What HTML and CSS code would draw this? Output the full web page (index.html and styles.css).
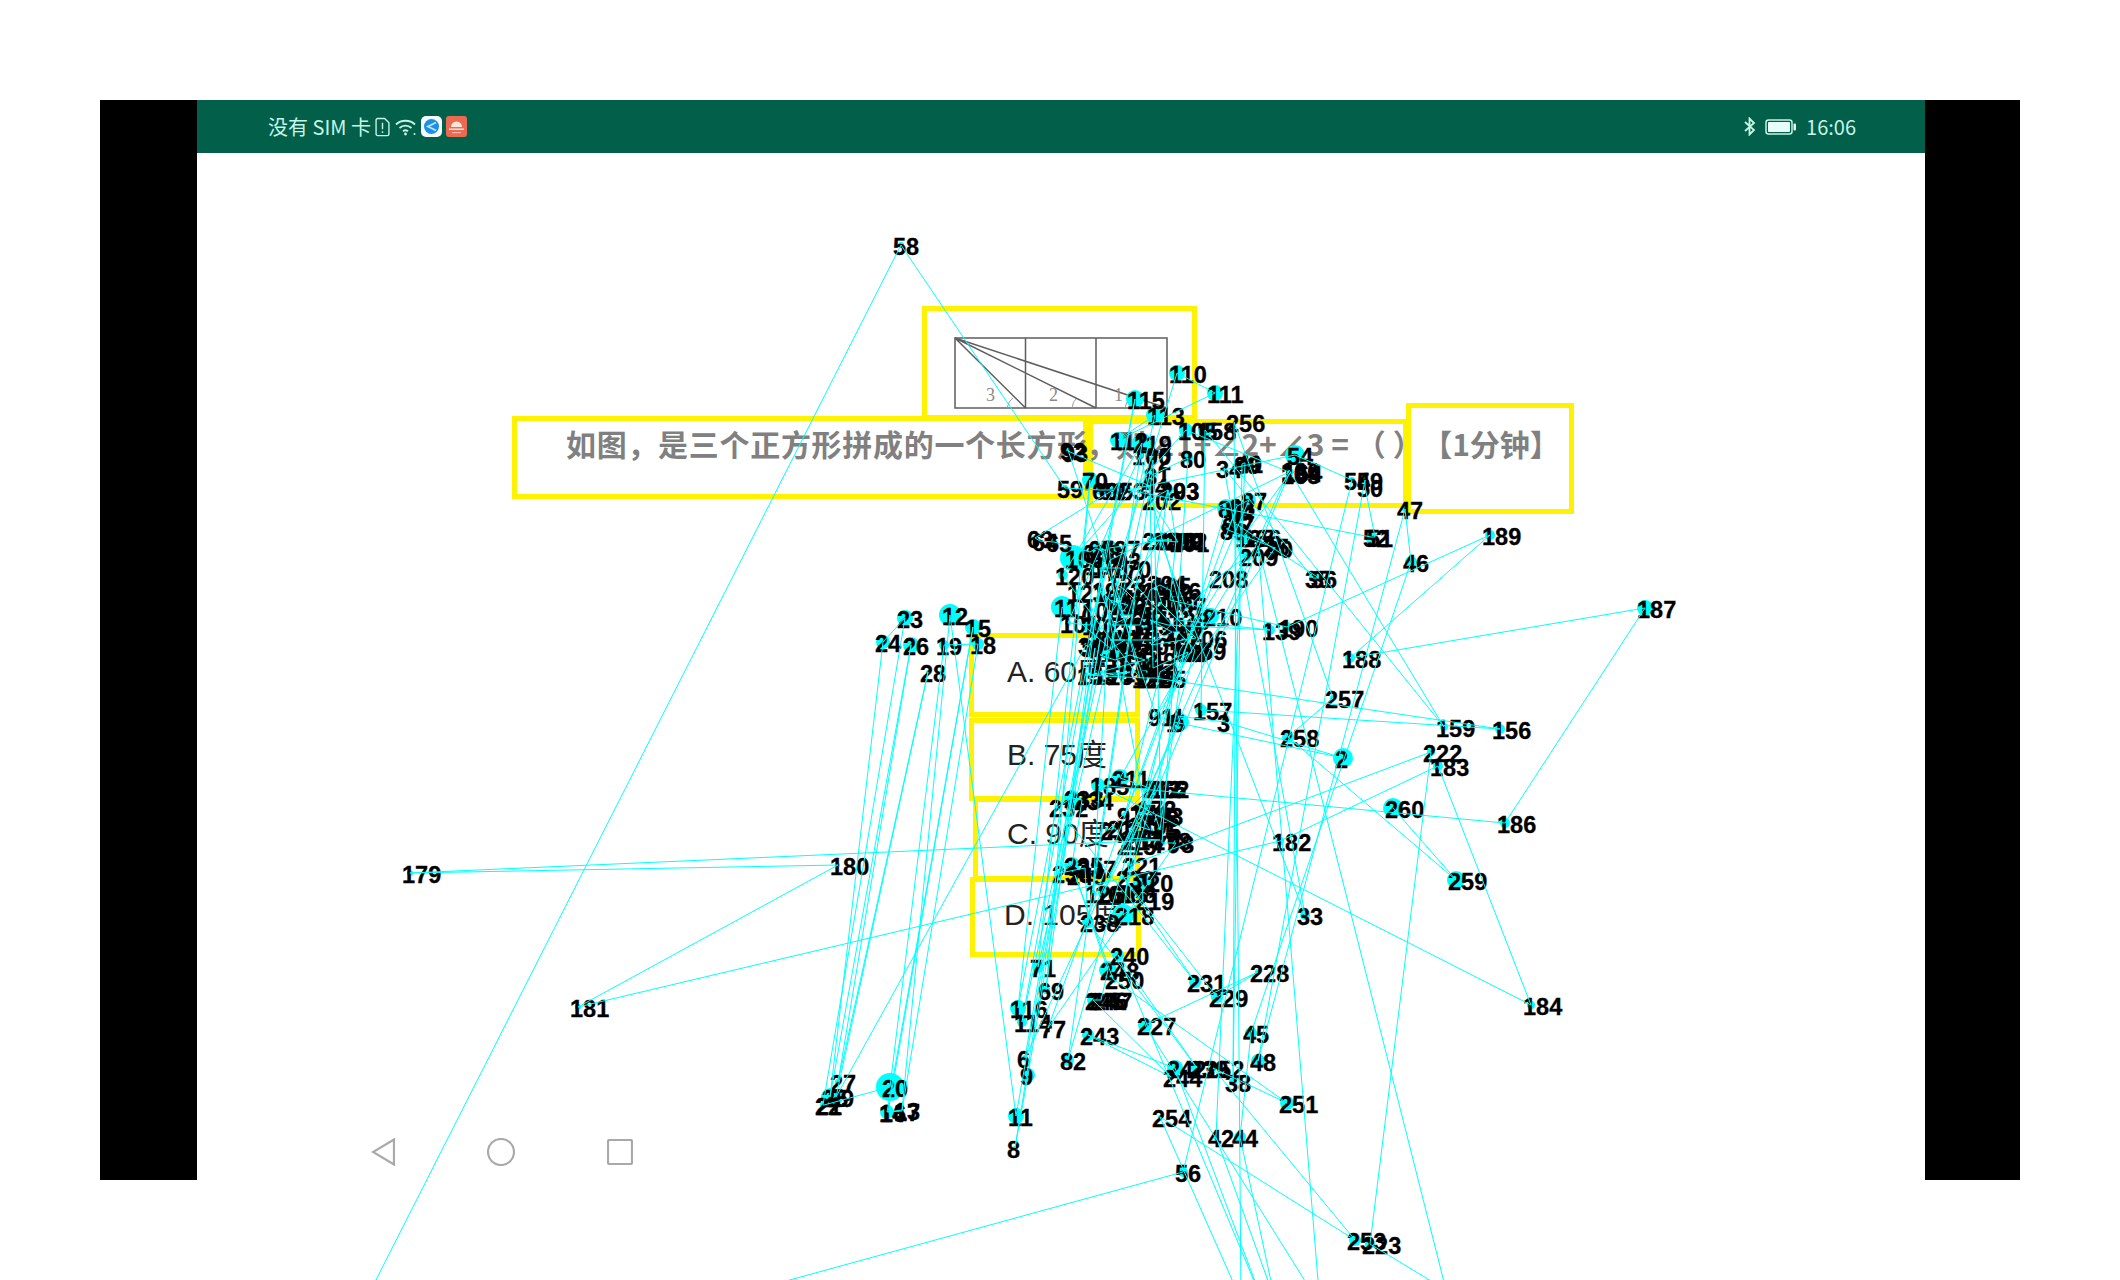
FILE: index.html
```html
<!DOCTYPE html>
<html lang="zh">
<head>
<meta charset="utf-8">
<title>关键点标注</title>
<link rel="stylesheet" href="styles.css">
</head>
<body>
<main class="stage">
  <section class="device">
    <div class="screen">
      <header class="statusbar">
        <div class="status-group">
          <span class="status-text">没有 SIM 卡</span>
          <svg class="ic-sim" viewBox="0 0 14 18"><path d="M1 2.500A1.500 1.500 0 0 1 2.500 1H9l4 4v10.500a1.500 1.500 0 0 1-1.500 1.500h-9A1.500 1.500 0 0 1 1 15.500z"/><path d="M7 5v6M7 13v1.500"/></svg>
          <svg class="ic-wifi" viewBox="0 0 21 18"><path d="M1 6.500C6 1.500 15 1.500 20 6.500M4.500 10C8 6.800 13 6.800 16.500 10M8 13.300c1.500-1.300 3.500-1.300 5 0"/><circle class="dot" cx="10.500" cy="16" r="1.400"/><circle class="dot" cx="19.500" cy="16" r="1"/></svg>
          <svg class="ic-app" viewBox="0 0 21 21"><rect width="21" height="21" rx="5" fill="#f4fbff"/><circle cx="10.500" cy="10.500" r="7.500" fill="#1c8fe6"/><path d="M15 6.500 7 10.500l8 4" fill="none" stroke="#bfe6ff" stroke-width="1.800"/></svg>
          <svg class="ic-app ic-app-orange" viewBox="0 0 21 21"><rect width="21" height="21" rx="3" fill="#ea6a52"/><path d="M5 11a5.500 5.500 0 0 1 11 0z" fill="#fde6d8"/><rect x="3" y="12.500" width="15" height="1.500" fill="#fde6d8"/><rect x="6" y="16" width="9" height="1.200" fill="#f7b7a4"/></svg>
        </div>
        <div class="status-group">
          <svg class="ic-bt" viewBox="0 0 13 19"><path d="M2 5l9 8-4.500 4.500v-16L11 6l-9 8"/></svg>
          <svg class="ic-battery" viewBox="0 0 32 16"><rect x="1" y="1" width="26" height="14" rx="2.500" class="shell"/><rect x="3" y="3" width="22" height="10" rx="1" class="charge"/><rect x="28.500" y="4.500" width="2.500" height="7" rx="1" class="charge"/></svg>
          <span class="status-text">16:06</span>
        </div>
      </header>
      <div class="page"></div>
      <nav class="navbar">
        <svg class="nav-back" viewBox="0 0 24 28"><path d="M23 1.500v25L2 14z"/></svg>
        <svg class="nav-home" viewBox="0 0 28 28"><circle cx="14" cy="14" r="13"/></svg>
        <svg class="nav-recent" viewBox="0 0 26 26"><rect x="1" y="1" width="24" height="24" rx="1.500"/></svg>
      </nav>
    </div>
  </section>

  <div class="box box-figure">
    <svg class="figure" viewBox="0 0 214 72">
      <rect x="1" y="1" width="212" height="70"/>
      <path d="M71.500 1v70M142 1v70M1 1l70.500 70M1 1l141 70M1 1l212 70"/>
      <path class="arc" d="M53 71q2-8 6-10M118 71q1-7 4-9M171 71q1-6 4-8"/>
      <text x="32" y="64">3</text><text x="95" y="64">2</text><text x="160" y="64">1</text>
    </svg>
  </div>
  <div class="box box-question q-a"><p class="question">如图，是三个正方形拼成的一个长方形</p></div>
  <div class="box box-question q-b"><p class="question">，则∠1+∠2+∠3 = （ ）</p></div>
  <div class="box box-time"><p class="question">【1分钟】</p></div>
  <div class="box box-option opt-a"><p class="option">A. 60度</p></div>
  <div class="box box-option opt-b"><p class="option">B. 75度</p></div>
  <div class="box box-option opt-c"><p class="option">C. 90度</p></div>
  <div class="box box-option opt-d"><p class="option">D. 105度</p></div>

  <svg id="pose" class="pose" viewBox="0 0 2120 1280"></svg>
</main>
<script src="script.js"></script>
</body>
</html>
```
FILE: styles.css
```css
* { box-sizing: border-box; }
html, body { margin: 0; background: #fff; overflow: hidden; }
.stage { position: relative; width: 2120px; height: 1280px; overflow: hidden; background: #fff; font-family: "Noto Sans CJK SC", "Liberation Sans", sans-serif; }

.device { margin: 100px 96px 0 100px; height: 1080px; padding: 0 95px 0 97px; background: #000; width: 1920px; }
.screen { display: flex; flex-direction: column; height: 100%; background: #fff; }
.statusbar { display: flex; justify-content: space-between; align-items: center; height: 53px; padding: 0 69px 0 71px; background: #025f4a; flex: none; }
.status-group { display: flex; align-items: center; gap: 5px; }
.status-text { font-family: "Noto Sans CJK SC", "Noto Sans", sans-serif; font-size: 20px; color: #c6f4e6; }
.ic-sim { width: 15px; height: 20px; margin-left: -1px; fill: none; stroke: #c6f4e6; stroke-width: 1.300; }
.ic-wifi { width: 21px; height: 18px; fill: none; stroke: #c6f4e6; stroke-width: 1.800; }
.ic-wifi .dot { fill: #c6f4e6; stroke: none; }
.ic-app { width: 21px; height: 21px; }
.ic-app-orange { margin-left: -1px; }
.ic-bt { width: 13px; height: 19px; margin-right: 4px; fill: none; stroke: #c6f4e6; stroke-width: 1.800; }
.ic-battery { width: 32px; height: 16px; margin-right: 4px; }
.ic-battery .shell { fill: none; stroke: #c6f4e6; stroke-width: 1.500; }
.ic-battery .charge { fill: #e6fff8; }
.page { flex: 1; }
.navbar { display: flex; align-items: center; gap: 92px; flex: none; padding: 0 0 14px 174px; }
.navbar svg { fill: none; stroke: #a9a9a9; stroke-width: 2.200; flex: none; }
.nav-back { width: 24px; height: 28px; }
.nav-home { width: 28px; height: 28px; }
.nav-recent { width: 26px; height: 26px; }

.box { position: absolute; border: 5px solid #fff200; }
.box-figure { left: 922px; top: 306px; width: 275px; height: 114px; padding: 26px 0 0 27px; }
.figure { display: block; width: 214px; height: 72px; overflow: visible; }
.figure rect, .figure path { fill: none; stroke: #5e5e5e; stroke-width: 1.500; }
.figure .arc { stroke: #9a9a9a; stroke-width: 1; }
.figure text { font-family: "Liberation Serif", serif; font-size: 18px; fill: #8a8a8a; }
.q-a { left: 512px; top: 416px; width: 576px; height: 83px; padding: 0 0 0 49px; }
.q-b { left: 1088px; top: 419px; width: 320px; height: 89px; padding: 0; }
.box-time { left: 1406px; top: 403px; width: 168px; height: 111px; padding: 13px 0 0 2px; text-align: center; }
.question { margin: 0; font-size: 30px; font-weight: 700; line-height: 44px; letter-spacing: .7px; color: #808080; white-space: nowrap; }
.q-b .question { letter-spacing: 0; margin-left: -7px; margin-top: -3px; }
.box-time .question { letter-spacing: 0; }

.box-option { height: 84px; padding: 14px 0 0 33px; }
.opt-a { left: 969px; top: 633px; width: 171px; }
.opt-b { left: 969px; top: 718px; width: 171px; height: 83px; padding-top: 12px; }
.opt-c { left: 973px; top: 797px; width: 167px; padding-left: 29px; padding-top: 12px; }
.opt-d { left: 970px; top: 877px; width: 171px; height: 80px; padding-left: 29px; padding-top: 13px; }
.option { margin: 0; font-family: "Liberation Sans", "Noto Sans CJK SC", sans-serif; font-size: 30px; line-height: 40px; color: #222; white-space: nowrap; }

.pose { position: absolute; left: 0; top: 0; width: 2120px; height: 1280px; }
.pose .joint { fill: #00ffff; }
.pose .bone { fill: none; stroke: #00ffff; stroke-width: 1; }
.pose .label { font-family: "Liberation Sans", sans-serif; font-size: 23.500px; font-weight: 700; fill: #000; stroke: #000; stroke-width: .3; }
```
FILE: script.js
```js
// Keypoints 1..260 as [x, y, radius]; the bones join them in index order.
var points = [
[1174,722,3],[1343,758,10],[1225,722,3],[1178,716,3],[1180,722,9],[1025,1058,3],[1095,648,2],[1015,1148,2],[1028,1075,7],[1100,640,3],
[1016,1116,8],[950,615,11],[902,1110,2],[887,1112,7],[973,627,8],[888,1112,4],[902,1111,2],[978,644,6],[944,645,5],[890,1087,14],
[824,1105,3],[823,1105,3],[905,618,8],[883,642,7],[830,1097,9],[911,645,8],[838,1082,3],[928,672,2],[836,1097,7],[1086,645,3],
[1088,647,3],[1160,540,3],[1305,915,5],[1224,468,2],[1313,578,4],[1319,578,4],[1236,524,4],[1233,1082,4],[1242,464,2],[1244,463,2],
[1245,463,3],[1216,1137,3],[1275,1300,1],[1240,1137,6],[1251,1033,6],[1411,562,6],[1405,509,3],[1258,1061,7],[1365,480,3],[1365,487,3],
[1375,537,3],[1371,537,6],[1128,490,3],[1295,455,10],[1352,480,3],[1183,1172,5],[309,1412,2],[901,245,3],[1065,488,3],[1100,490,5],
[1107,490,5],[1113,490,5],[1035,538,3],[1040,541,2],[1054,542,3],[1090,552,3],[1096,548,5],[1104,552,4],[1046,990,4],[1090,480,8],
[1038,967,6],[1153,460,4],[1161,817,3],[1155,815,3],[1160,830,3],[1184,652,2],[1048,1028,2],[1176,843,4],[1162,843,3],[1188,458,5],
[1152,475,5],[1068,1060,6],[1226,508,9],[1236,512,3],[1230,525,3],[1184,652,3],[1249,500,7],[1237,506,5],[1228,530,3],[1275,548,6],
[1156,716,2],[1068,450,3],[1070,452,3],[1150,486,3],[1153,668,11],[1188,652,3],[1125,815,3],[1160,672,4],[1192,652,3],[1140,455,3],
[1068,623,3],[1090,625,8],[1110,560,5],[1289,472,3],[1186,430,7],[1073,558,13],[1093,565,4],[1090,610,3],[1095,640,3],[1177,373,8],
[1215,393,8],[1118,440,8],[1155,415,9],[1022,1022,5],[1135,399,9],[1018,1008,8],[1062,607,11],[1112,650,12],[1142,443,10],[1063,575,5],
[1075,592,3],[1140,678,3],[1115,583,3],[1125,590,3],[1135,600,4],[1093,893,3],[1110,600,6],[1128,605,3],[1120,615,3],[1133,615,3],
[1112,625,3],[1126,625,3],[1140,625,3],[1150,590,3],[1160,585,3],[1170,590,3],[1175,605,3],[1178,620,3],[1270,630,5],[1168,625,3],
[1150,620,9],[1172,632,3],[1158,640,3],[1110,640,3],[1125,640,3],[1100,655,3],[1115,660,3],[1130,655,3],[1145,660,3],[1100,672,3],
[1115,675,3],[1130,672,3],[1085,675,3],[1145,678,3],[1155,678,3],[1500,729,5],[1201,710,6],[1205,430,7],[1444,727,4],[1289,470,3],
[1103,893,5],[1158,788,3],[1289,474,3],[1291,472,3],[1243,537,7],[1250,537,3],[1180,650,3],[1125,893,5],[1195,650,3],[1120,568,3],
[1100,568,3],[1145,808,3],[1152,815,3],[1138,812,3],[1150,830,3],[1135,825,3],[1128,838,3],[1160,840,3],[410,873,3],[838,865,2],
[578,1007,3],[1280,841,4],[1438,766,5],[1531,1005,4],[1098,785,7],[1505,823,5],[1645,608,8],[1350,658,5],[1490,535,5],[1287,627,5],
[1170,600,3],[1176,540,3],[1168,490,5],[1120,640,6],[1100,590,3],[1115,605,3],[1109,548,8],[1166,540,3],[1172,540,3],[1150,540,3],
[1178,542,3],[1150,500,3],[1168,490,3],[1155,583,3],[1162,604,3],[1196,638,3],[1151,645,4],[1217,578,2],[1247,556,5],[1211,616,8],
[1120,778,9],[1150,788,8],[1108,830,3],[1115,828,3],[1125,845,3],[1155,788,3],[1132,840,3],[1123,915,11],[1143,900,3],[1142,882,9],
[1130,865,3],[1431,752,4],[1370,1244,5],[1446,1290,1],[1258,546,2],[1320,1305,1],[1145,1025,7],[1258,972,3],[1217,997,6],[1124,878,3],
[1195,982,6],[1057,807,2],[1072,798,8],[1082,800,3],[1072,865,8],[1060,873,3],[1085,868,3],[1088,922,6],[1197,1068,6],[1118,955,6],
[1262,1300,1],[1175,1068,8],[1088,1035,6],[1171,1077,3],[1093,1000,6],[1097,1000,3],[1101,1000,3],[1108,970,9],[1075,875,3],[1113,979,4],
[1287,1103,7],[1213,1068,3],[1355,1240,6],[1160,1117,2],[1241,1300,1],[1234,422,1],[1333,698,3],[1288,737,6],[1456,880,9],[1393,808,10]
];

var NS = "http://www.w3.org/2000/svg";
var svg = document.getElementById("pose");

function make(tag, cls, attrs) {
  var el = document.createElementNS(NS, tag);
  el.setAttribute("class", cls);
  for (var k in attrs) el.setAttribute(k, attrs[k]);
  return el;
}

points.forEach(function (p) {
  svg.appendChild(make("circle", "joint", { cx: p[0], cy: p[1], r: p[2] }));
});
points.forEach(function (p, i) {
  var t = make("text", "label", { x: p[0] - 8, y: p[1] + 10 });
  t.textContent = String(i + 1);
  svg.appendChild(t);
});
svg.appendChild(make("polyline", "bone", {
  points: points.map(function (p) { return p[0] + "," + p[1]; }).join(" ")
}));
```
